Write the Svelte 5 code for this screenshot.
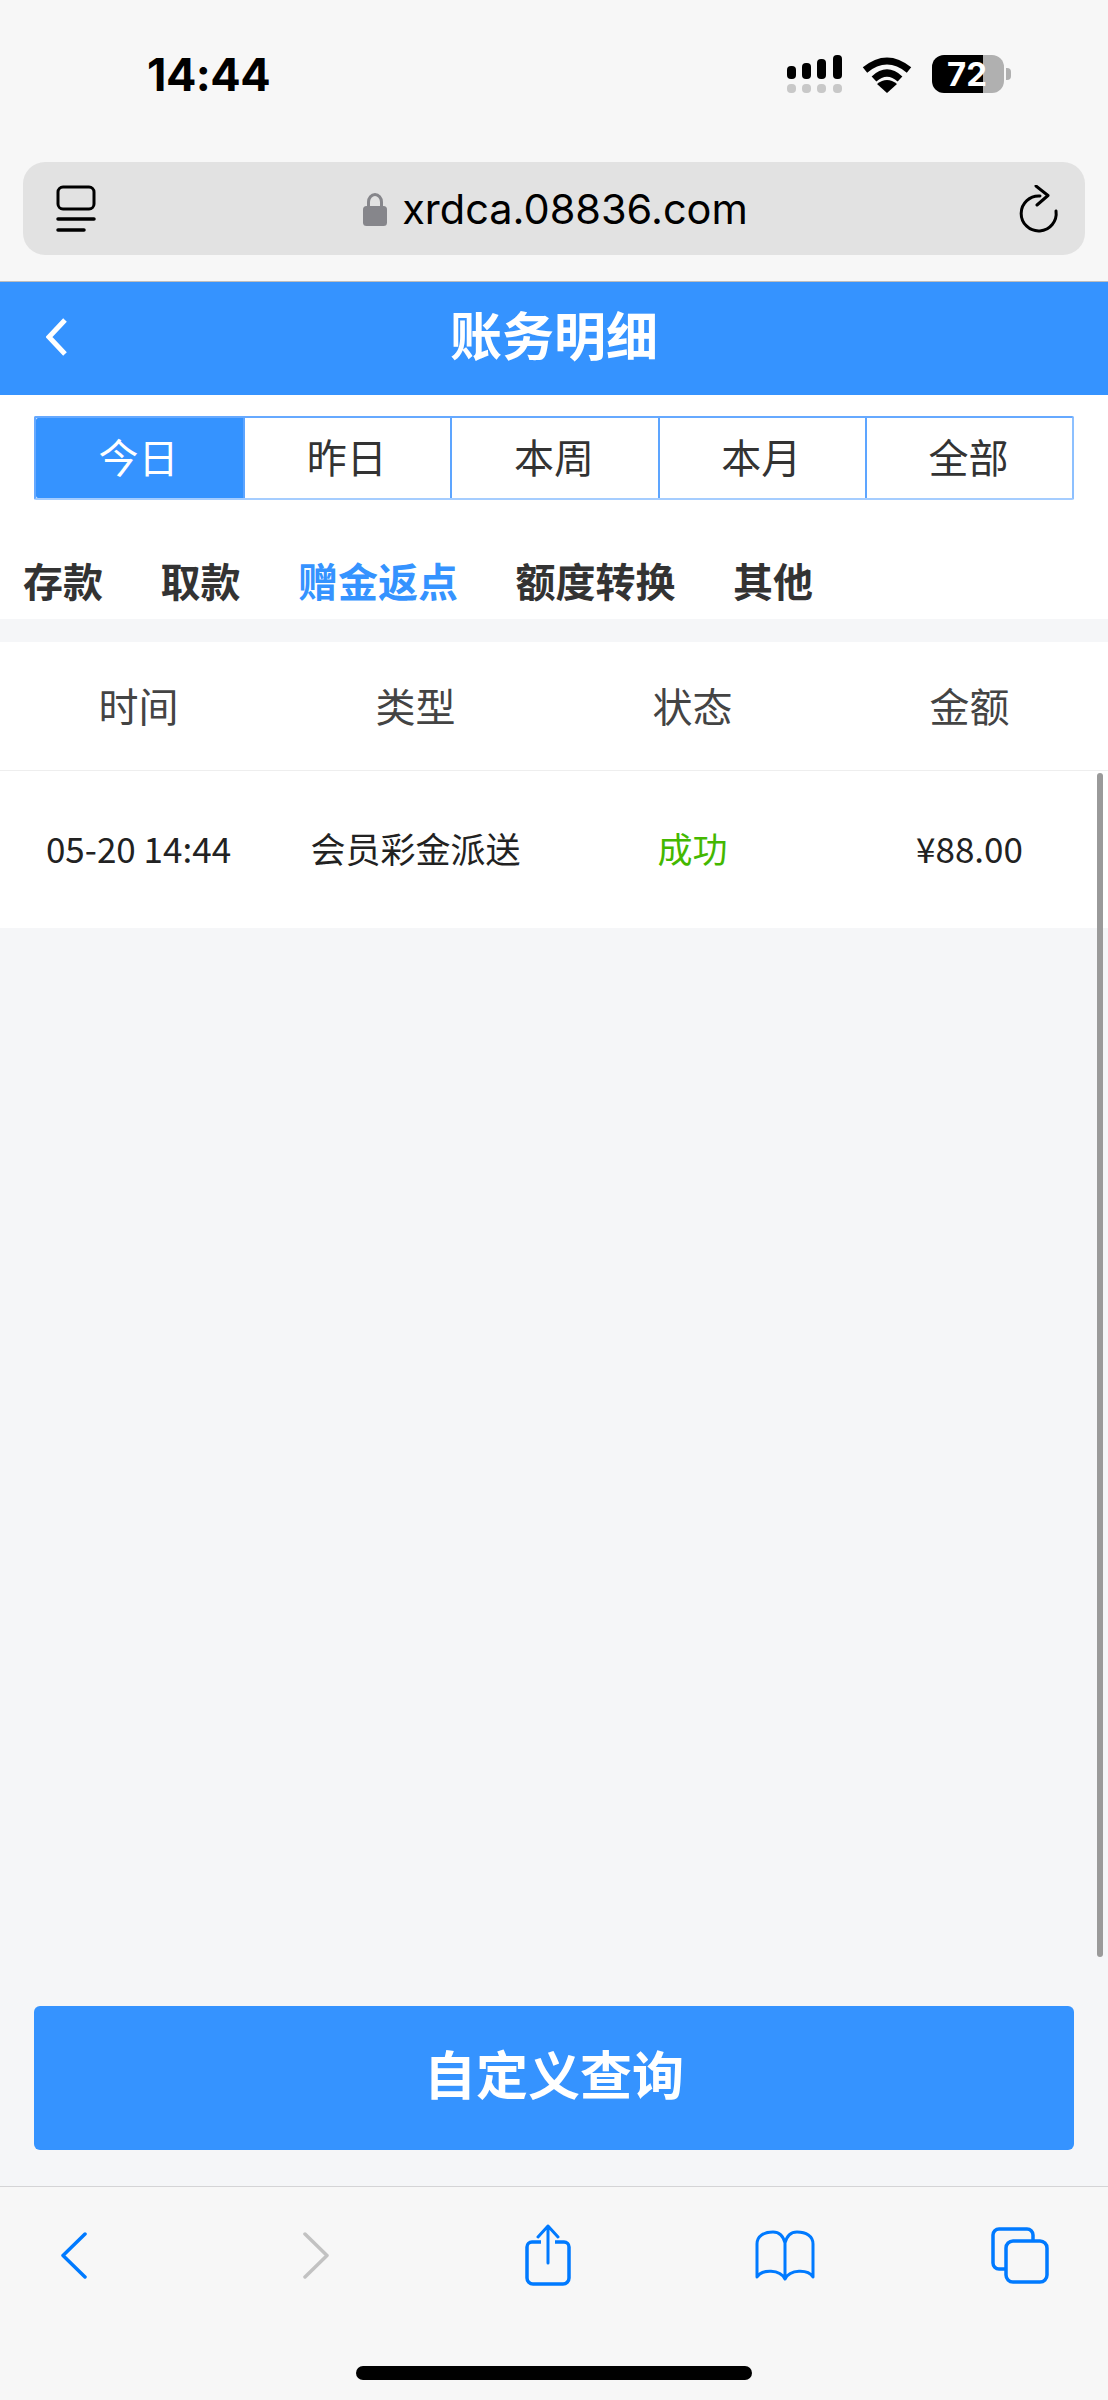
<script>
  const periods = ['今日', '昨日', '本周', '本月', '全部'];
  const kinds = ['存款', '取款', '赠金返点', '额度转换', '其他'];
  const heads = ['时间', '类型', '状态', '金额'];
</script>

<div class="page">
  <div class="chrome">
    <div class="status">
      <span class="time">14:44</span>
      <div class="indicators">
        <svg class="signal" width="58" height="40" viewBox="0 0 58 40" aria-hidden="true">
          <g fill="#000">
            <rect x="1" y="11" width="9" height="13" rx="4" />
            <rect x="16" y="8" width="9" height="16" rx="4" />
            <rect x="31" y="4" width="9" height="20" rx="4" />
            <rect x="47" y="0" width="9" height="24" rx="4" />
          </g>
          <g fill="#c8c8c8">
            <rect x="1" y="29" width="9" height="9" rx="4" />
            <rect x="16" y="29" width="9" height="9" rx="4" />
            <rect x="31" y="29" width="9" height="9" rx="4" />
            <rect x="47" y="29" width="9" height="9" rx="4" />
          </g>
        </svg>
        <svg class="wifi" width="50" height="36" viewBox="0 0 50 36" aria-hidden="true">
          <path d="M3 13 Q25 -5 47 13" fill="none" stroke="#000" stroke-width="7" />
          <path d="M12 22 Q25 10 38 22" fill="none" stroke="#000" stroke-width="7" />
          <path d="M15 27 Q25 19 35 27 L25 36 Z" fill="#000" />
        </svg>
        <div class="battery">
          <div class="cell"><span class="pct">72</span></div>
          <i class="nub"></i>
        </div>
      </div>
    </div>
    <div class="urlbar">
      <svg class="tabicon" width="40" height="48" viewBox="0 0 40 48" aria-hidden="true">
        <rect x="2" y="2" width="36" height="22" rx="5" fill="none" stroke="#000" stroke-width="3" />
        <path d="M2 34 H38 M2 45 H28" stroke="#000" stroke-width="3.5" stroke-linecap="round" />
      </svg>
      <div class="address">
        <svg width="24" height="34" viewBox="0 0 24 34" aria-hidden="true">
          <path d="M5.500 16 V10 a6.500 7.500 0 0 1 13 0 V16" fill="none" stroke="#86868b" stroke-width="3" />
          <rect x="0" y="14" width="24" height="20" rx="3.500" fill="#86868b" />
        </svg>
        <span>xrdca.08836.com</span>
      </div>
      <svg class="reload" width="40" height="48" viewBox="0 0 40 48" aria-hidden="true">
        <path d="M21 11 A17.500 17.500 0 1 0 37 26" fill="none" stroke="#000" stroke-width="3" stroke-linecap="round" />
        <path d="M17 1 L29 10.500 L18 20" fill="none" stroke="#000" stroke-width="3" stroke-linecap="round" stroke-linejoin="round" />
      </svg>
    </div>
  </div>

  <header class="title">
    <svg class="back" width="22" height="38" viewBox="0 0 22 38" aria-hidden="true">
      <path d="M19 2 L3 19 L19 36" fill="none" stroke="#fff" stroke-width="5" />
    </svg>
    <h1>账务明细</h1>
  </header>

  <div class="filters">
    <div class="periods">
      {#each periods as p, i}
        <div class="period" class:on={i === 0}>{p}</div>
      {/each}
    </div>
    <div class="kinds">
      {#each kinds as k, i}
        <span class="kind" class:on={i === 2}>{k}</span>
      {/each}
    </div>
  </div>

  <main class="content">
    <div class="row head">
      {#each heads as h}<div>{h}</div>{/each}
    </div>
    <div class="row data">
      <div>05-20 14:44</div>
      <div>会员彩金派送</div>
      <div class="ok">成功</div>
      <div>¥88.00</div>
    </div>
    <div class="spacer"></div>
    <div class="query">自定义查询</div>
    <i class="scrollbar"></i>
  </main>

  <nav class="toolbar">
    <div class="tools">
      <svg width="26" height="47" viewBox="0 0 26 47" aria-hidden="true">
        <path d="M24 2 L2 23.500 L24 45" fill="none" stroke="#007aff" stroke-width="3.500" stroke-linecap="round" stroke-linejoin="round" />
      </svg>
      <svg width="26" height="47" viewBox="0 0 26 47" aria-hidden="true">
        <path d="M2 2 L24 23.500 L2 45" fill="none" stroke="#c2c2c2" stroke-width="3.500" stroke-linecap="round" stroke-linejoin="round" />
      </svg>
      <svg width="46" height="62" viewBox="0 0 46 62" aria-hidden="true">
        <path d="M16 18 H7 a5 5 0 0 0 -5 5 V54 a6 6 0 0 0 6 6 H38 a6 6 0 0 0 6 -6 V23 a5 5 0 0 0 -5 -5 H30" fill="none" stroke="#007aff" stroke-width="3.500" />
        <path d="M23 39 V2 M13 13 L23 2 L33 13" fill="none" stroke="#007aff" stroke-width="3" stroke-linecap="round" stroke-linejoin="round" />
      </svg>
      <svg width="60" height="51" viewBox="0 0 60 51" aria-hidden="true">
        <path d="M30 13 C28 5 24 2 18 2 C9 2 2 6 2 14 V47 C7 39 25 39 30 49 C35 39 53 39 58 47 V14 C58 6 51 2 42 2 C36 2 32 5 30 13 V49" fill="none" stroke="#007aff" stroke-width="3" stroke-linejoin="round" />
      </svg>
      <svg width="58" height="57" viewBox="0 0 58 57" aria-hidden="true">
        <path d="M42 13 V8 a6 6 0 0 0 -6 -6 H8 a6 6 0 0 0 -6 6 V36 a6 6 0 0 0 6 6 H14" fill="none" stroke="#007aff" stroke-width="3.500" />
        <rect x="15" y="14" width="41" height="41" rx="7" fill="none" stroke="#007aff" stroke-width="3.500" />
      </svg>
    </div>
    <i class="home"></i>
  </nav>
</div>

<style>
  :global(body) {
    margin: 0;
    background: #f5f6f8;
  }
  .page {
    position: relative;
    width: 1108px;
    height: 2400px;
    display: flex;
    flex-direction: column;
    overflow: hidden;
    font-family: "Noto Sans CJK SC", "Noto Sans", sans-serif;
  }
  .chrome {
    height: 282px;
    flex: none;
    box-sizing: border-box;
    background: #f7f7f7;
    border-bottom: 1px solid #bdbdbd;
    padding: 0 23px;
  }
  .status {
    height: 162px;
    box-sizing: border-box;
    display: flex;
    justify-content: space-between;
    align-items: flex-start;
    padding: 48px 74px 0 124px;
  }
  .time {
    font: 700 45px/54px Inter, "Liberation Sans", sans-serif;
    color: #000;
    letter-spacing: -0.5px;
  }
  .indicators {
    display: flex;
    align-items: flex-start;
    padding-top: 7px;
  }
  .wifi {
    margin: 2px 20px 0 18px;
  }
  .battery {
    display: flex;
    align-items: center;
  }
  .cell {
    width: 72px;
    height: 38px;
    border-radius: 12px;
    background: linear-gradient(90deg, #000 0, #000 51px, #b0b0b0 51px);
    display: flex;
    align-items: center;
    justify-content: center;
  }
  .pct {
    font: 700 33px/38px Inter, "Liberation Sans", sans-serif;
    color: #fff;
    margin-left: -2px;
  }
  .nub {
    width: 5px;
    height: 12px;
    margin-left: 2px;
    background: #b0b0b0;
    border-radius: 0 4px 4px 0;
  }
  .urlbar {
    height: 93px;
    box-sizing: border-box;
    background: #e2e2e2;
    border-radius: 22px;
    display: flex;
    align-items: center;
    justify-content: space-between;
    padding: 0 26px 0 33px;
  }
  .address {
    display: flex;
    align-items: center;
    gap: 15px;
    color: #000;
    font: 400 41.5px/48px Inter, "Liberation Sans", sans-serif;
    margin-left: -4px;
  }
  .title {
    position: relative;
    height: 113px;
    flex: none;
    background: #3593ff;
    display: flex;
    align-items: center;
    justify-content: center;
  }
  .back {
    position: absolute;
    left: 46px;
    top: 36px;
  }
  h1 {
    margin: 0;
    font-size: 52px;
    line-height: 113px;
    font-weight: 700;
    color: #fff;
    position: relative;
    top: -5px;
  }
  .filters {
    flex: none;
    height: 224px;
    box-sizing: border-box;
    background: #fff;
    padding-top: 21px;
  }
  .periods {
    margin: 0 34px;
    height: 84px;
    box-sizing: border-box;
    display: grid;
    grid-template-columns: repeat(5, 1fr);
    border: 2px solid #66a9ff;
    border-bottom: 2px solid #a5cdff;
    border-right-color: #8dc0ff;
    border-radius: 2px;
  }
  .period {
    font-size: 40px;
    line-height: 76px;
    text-align: center;
    color: #333;
    border-left: 2px solid #5da5ff;
    padding-right: 2px;
  }
  .period:first-child {
    border-left: 0;
  }
  .period.on {
    background: #3593ff;
    color: #fff;
    border-radius: 2px 0 0 2px;
  }
  .kinds {
    display: flex;
    gap: 57.5px;
    padding: 50px 0 0 23px;
  }
  .kind {
    font-size: 40px;
    line-height: 60px;
    font-weight: 700;
    color: #333;
  }
  .kind.on {
    color: #3593ff;
  }
  .content {
    position: relative;
    flex: 1;
    display: flex;
    flex-direction: column;
    padding-top: 23px;
    background: #f5f6f8;
    border-bottom: 1px solid #d4d4d6;
  }
  .row {
    display: grid;
    grid-template-columns: repeat(4, 1fr);
    background: #fff;
    text-align: center;
    color: #333;
    align-items: center;
  }
  .row.head {
    height: 129px;
    box-sizing: border-box;
    border-bottom: 1px solid #eeeeee;
    font-size: 40px;
    line-height: 116px;
    color: #444;
    padding-bottom: 2px;
  }
  .row.data {
    height: 157px;
    font-size: 35px;
    line-height: 50px;
    color: #222;
    padding-bottom: 3px;
    box-sizing: border-box;
  }
  .ok {
    color: #44b800;
  }
  .spacer {
    flex: 1;
  }
  .query {
    margin: 0 34px 36px;
    height: 144px;
    background: #3593ff;
    border-radius: 6px;
    color: #fff;
    font-size: 52px;
    font-weight: 700;
    line-height: 134px;
    text-align: center;
  }
  .scrollbar {
    position: absolute;
    right: 5px;
    top: 154px;
    width: 6px;
    height: 1184px;
    border-radius: 3px;
    background: #9a9a9a;
  }
  .toolbar {
    flex: none;
    height: 213px;
    background: #f7f7f7;
    position: relative;
  }
  .tools {
    height: 136px;
    display: flex;
    align-items: center;
    padding-left: 61px;
  }
  .tools svg:nth-child(2) {
    margin-left: 216px;
  }
  .tools svg:nth-child(3) {
    margin-left: 196px;
  }
  .tools svg:nth-child(4) {
    margin-left: 184px;
  }
  .tools svg:nth-child(5) {
    margin-left: 176px;
  }
  .home {
    position: absolute;
    left: 356px;
    bottom: 20px;
    width: 396px;
    height: 14px;
    border-radius: 7px;
    background: #000;
  }
</style>
